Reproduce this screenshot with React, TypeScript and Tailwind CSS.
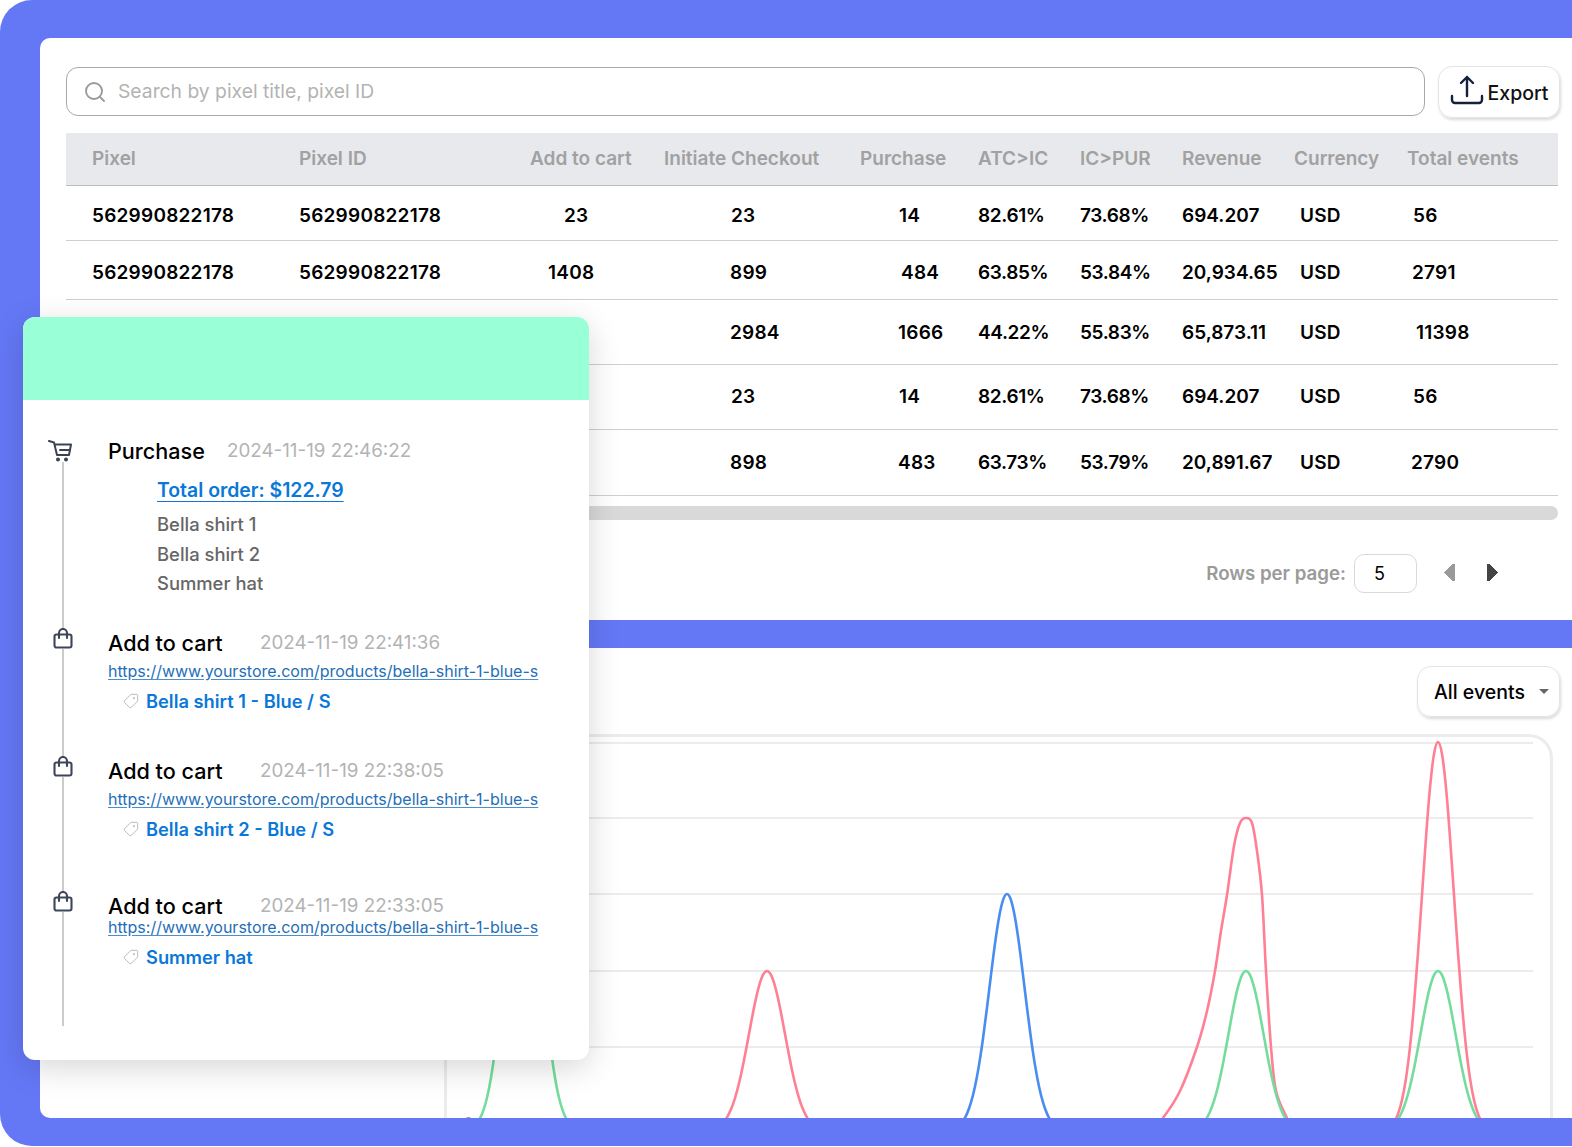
import { Search, Tag } from "lucide-react";

const headers = ["Pixel", "Pixel ID", "Add to cart", "Initiate Checkout", "Purchase", "ATC>IC", "IC>PUR", "Revenue", "Currency", "Total events"];

const gridCols = "grid grid-cols-[233px_231px_134px_196px_118px_102px_102px_112px_113px_151px]";

const tight = "tracking-normal";
const pct = "tracking-[-0.02em]";

const rows = [
  {
    h: "h-[55px] pt-[6px]",
    cells: [
      ["562990822178", "pl-[26px]"], ["562990822178", ""], ["23", "pl-[34px]"], ["23", "pl-[67px]"], ["14", "pl-[39px]"],
      ["82.61%", pct], ["73.68%", pct], ["694.207", tight], ["USD", "pl-[6px]"], ["56", "pl-[6px]"],
    ],
  },
  {
    h: "h-[59px] pt-[6px]",
    cells: [
      ["562990822178", "pl-[26px]"], ["562990822178", ""], ["1408", "pl-[18px]"], ["899", "pl-[66px]"], ["484", "pl-[41px]"],
      ["63.85%", pct], ["53.84%", pct], ["20,934.65", tight], ["USD", "pl-[6px]"], ["2791", "pl-[5px]"],
    ],
  },
  {
    h: "h-[65px] pt-[2px]",
    cells: [
      ["562990822178", "pl-[26px]"], ["562990822178", ""], ["6748", "pl-[10px]"], ["2984", "pl-[66px]"], ["1666", "pl-[38px]"],
      ["44.22%", pct], ["55.83%", pct], ["65,873.11", tight], ["USD", "pl-[6px]"], ["11398", "pl-[9px]"],
    ],
  },
  {
    h: "h-[65px]",
    cells: [
      ["562990822178", "pl-[26px]"], ["562990822178", ""], ["23", "pl-[34px]"], ["23", "pl-[67px]"], ["14", "pl-[39px]"],
      ["82.61%", pct], ["73.68%", pct], ["694.207", tight], ["USD", "pl-[6px]"], ["56", "pl-[6px]"],
    ],
  },
  {
    h: "h-[66px] pt-[2px]",
    cells: [
      ["562990822178", "pl-[26px]"], ["562990822178", ""], ["1409", "pl-[10px]"], ["898", "pl-[66px]"], ["483", "pl-[38px]"],
      ["63.73%", pct], ["53.79%", pct], ["20,891.67", tight], ["USD", "pl-[6px]"], ["2790", "pl-[4px]"],
    ],
  },
];

const ExportIcon = () => (
  <svg width="34" height="32" viewBox="0 0 34 32" fill="none" stroke="#14213d" strokeWidth="2.4" strokeLinecap="round" strokeLinejoin="round" className="-mt-[5px]">
    <path d="M17 22V3M11 9l6-6 6 6" />
    <path d="M2 22v4a3 3 0 0 0 3 3h24a3 3 0 0 0 3-3v-4" />
  </svg>
);

const CartIcon = () => (
  <svg width="24" height="22" viewBox="0 0 24 22" fill="none" stroke="#3a4354" strokeWidth="2" strokeLinecap="round" strokeLinejoin="round">
    <path d="M1 1l5 1.5L9 15h12l2-10.5H6.5" />
    <path d="M12 10h10" />
    <circle cx="10" cy="19.5" r="1" fill="#3a4354" />
    <circle cx="18" cy="19.5" r="1" fill="#3a4354" />
  </svg>
);

const BagIcon = () => (
  <svg width="20" height="21" viewBox="0 0 20 21" fill="none" stroke="#3d4658" strokeWidth="2.1" strokeLinecap="round" strokeLinejoin="round" className="block">
    <rect x="1.5" y="6.5" width="17" height="13" rx="2" />
    <path d="M6 10V5a4 4 0 0 1 8 0v5" />
  </svg>
);

const AddToCart = ({ date, name, className, urlClass }: { date: string; name: string; className: string; urlClass: string }) => (
  <div className={`relative pl-[85px] ${className}`}>
    <div className="absolute left-[30px] -top-[1px] bg-white">
      <BagIcon />
    </div>
    <div className="flex items-center">
      <span className="text-[21.6px] leading-[28px] font-medium text-black w-[152px]">Add to cart</span>
      <span className="text-[18.8px] leading-[26px] text-[#b3b3b3]">{date}</span>
    </div>
    <div className={`text-[16px] leading-[24px] text-[#1f6fb8] underline underline-offset-2 decoration-[#4a90d0] ${urlClass}`}>
      https://www.yourstore.com/products/bella-shirt-1-blue-s
    </div>
    <div className="flex items-center mt-[6px] pl-[15px] gap-[7px]">
      <Tag size={16} strokeWidth={1} color="#9a9a9a" className="rotate-90" />
      <span className="text-[18.3px] leading-[24px] font-semibold text-[#0a78d8]">{name}</span>
    </div>
  </div>
);

// smooth line through a list of points
const smooth = (pts: number[][]) => {
  let d = `M${pts[0][0]} ${pts[0][1]}`;
  for (let i = 0; i < pts.length - 1; i++) {
    const p0 = pts[i - 1] || pts[i];
    const p1 = pts[i];
    const p2 = pts[i + 1];
    const p3 = pts[i + 2] || p2;
    d += ` C${p1[0] + (p2[0] - p0[0]) / 6} ${p1[1] + (p2[1] - p0[1]) / 6} ${p2[0] - (p3[0] - p1[0]) / 6} ${p2[1] - (p3[1] - p1[1]) / 6} ${p2[0]} ${p2[1]}`;
  }
  return d;
};

const bump = (cx: number, top: number, s: number) => {
  const pts: number[][] = [];
  for (let dx = -60; dx <= 60; dx += 4) {
    pts.push([cx + dx, 1130 - (1130 - top) * Math.exp(-(dx * dx) / (2 * s * s))]);
  }
  return smooth(pts);
};

const midPink = smooth([
  [1150, 1131], [1163, 1117], [1180, 1090], [1197, 1046], [1207, 1010], [1215, 970], [1221, 930], [1227, 894],
  [1234, 845], [1240, 822], [1246, 817], [1252, 822], [1257, 850], [1262, 894], [1266, 970], [1271, 1046],
  [1276, 1090], [1287, 1117], [1295, 1131],
]);

const Chart = () => (
  <svg className="w-[1109px] h-[387px]" viewBox="444 733 1109 387" fill="none">
    <path d="M447 742H1533M447 817H1533M447 893H1533M447 970H1533M447 1046H1533" stroke="#ececec" strokeWidth="2" />
    <text x="464" y="1127" fontSize="14" fill="#999">0</text>
    <path d={bump(523, 817, 17)} stroke="#74dc9c" strokeWidth="2.6" />
    <path d={bump(767, 970, 18)} stroke="#ff7f95" strokeWidth="2.6" />
    <path d={bump(1007, 893, 17.5)} stroke="#4a8df0" strokeWidth="2.6" />
    <path d={midPink} stroke="#ff7f95" strokeWidth="2.6" />
    <path d={bump(1246, 970, 17.5)} stroke="#74dc9c" strokeWidth="2.6" />
    <path d={bump(1438, 741, 16)} stroke="#ff7f95" strokeWidth="2.6" />
    <path d={bump(1438, 970, 17.5)} stroke="#74dc9c" strokeWidth="2.6" />
  </svg>
);

export default function App() {
  return (
    <div className="relative w-[1572px] h-[1147px] bg-white overflow-hidden font-['Inter',sans-serif]">
      <div className="flex flex-col w-full h-[1146px] bg-[#6478f6] rounded-l-[32px] pl-[40px] pt-[38px] pb-[28px] gap-[28px]">
        <div className="h-[582px] bg-white rounded-tl-[10px] pl-[26px] pt-[29px] pr-[12px]">
          <div className="flex gap-[13px] items-start">
            <div className="flex items-center shrink-0 w-[1359px] h-[49px] border border-[#a8a8a8] rounded-[12px] pl-[16px] gap-[11px]">
              <Search size={24} strokeWidth={1.9} color="#9a9a9a" />
              <span className="text-[19.3px] text-[#b3b3b3]">Search by pixel title, pixel ID</span>
            </div>
            <div className="flex items-center justify-center shrink-0 gap-[4px] w-[122px] h-[52px] -mt-[1px] rounded-[14px] border border-[#e4e4e4] shadow-[1px_2px_3px_rgba(0,0,0,0.15)]">
              <ExportIcon />
              <span className="text-[19.5px] font-medium text-[#111] pt-[4px]">Export</span>
            </div>
          </div>
          <div className="mt-[15px] w-[1492px]">
            <div className={`${gridCols} items-center h-[53px] bg-[#e8e9ed] border-b border-[#bdbdbd] text-[19px] font-semibold text-[#a1a1a1]`}>
              {headers.map((h, i) => (
                <div key={h} className={i === 0 ? "pl-[26px]" : ""}>{h}</div>
              ))}
            </div>
            {rows.map((r, i) => (
              <div key={i} className={`${gridCols} items-center ${r.h} border-b border-[#cfcfcf] text-[19px] tracking-[0.012em] font-semibold text-black`}>
                {r.cells.map((c, j) => (
                  <div key={j} className={c[1]}>{c[0]}</div>
                ))}
              </div>
            ))}
            <div className="h-[14px] mt-[10px] rounded-full bg-[#d9d9d9]" />
          </div>
          <div className="flex items-center justify-end mt-[34px] pr-[62px]">
            <span className="text-[18.7px] font-semibold text-[#9a9a9a] pt-[2px]">Rows per page:</span>
            <div className="flex items-center w-[63px] h-[39px] ml-[8px] pl-[19px] border border-[#d9d9d9] rounded-[10px] text-[18px] text-black">5</div>
            <svg width="11" height="17" viewBox="0 0 11 17" className="ml-[27px] -mt-[2px]" shapeRendering="crispEdges"><path d="M11 0v17H8L0 8.5 8 0z" fill="#9a9a9a" /></svg>
            <svg width="11" height="17" viewBox="0 0 11 17" className="ml-[32px] -mt-[2px]" shapeRendering="crispEdges"><path d="M0 0v17h3l8-8.5L3 0z" fill="#444" /></svg>
          </div>
        </div>
        <div className="flex-1 min-h-0 bg-white rounded-bl-[10px] overflow-hidden pl-[404px]">
          <div className="flex justify-end pt-[18px] pr-[12px]">
            <div className="flex items-center w-[143px] h-[51px] pl-[16px] rounded-[14px] border border-[#e4e4e4] shadow-[1px_2px_3px_rgba(0,0,0,0.15)]">
              <span className="text-[19.5px] font-medium text-black pt-[3px]">All events</span>
              <span className="ml-[14px] w-0 h-0 border-x-[5px] border-x-transparent border-t-[5px] border-t-[#666]" />
            </div>
          </div>
          <div className="mt-[17px] w-[1109px] h-[387px] border-[3px] border-b-0 border-[#ececec] rounded-tr-[24px] overflow-hidden">
            <div className="-ml-[3px] -mt-[3px]"><Chart /></div>
          </div>
        </div>
      </div>

      <div className="absolute left-[23px] top-[317px] w-[566px] h-[743px] bg-white rounded-[12px] overflow-hidden shadow-[0_8px_32px_rgba(0,0,0,0.16)]">
        <div className="h-[83px] bg-[#99ffd6]" />
        <div className="relative pt-[37px]">
          <div className="absolute left-[39px] top-[50px] h-[576px] w-[2px] bg-[#cccccc]" />
          <div className="relative pl-[85px]">
            <div className="absolute left-[25px] top-[3px] bg-white">
              <CartIcon />
            </div>
            <div className="flex items-center">
              <span className="text-[21.6px] leading-[28px] font-medium text-black w-[119px]">Purchase</span>
              <span className="text-[18.8px] leading-[26px] text-[#b3b3b3]">2024-11-19 22:46:22</span>
            </div>
            <div className="pl-[49px] mt-[11px]">
              <span className="text-[19.4px] leading-[28px] font-semibold text-[#0a78d8] underline underline-offset-4">Total order: $122.79</span>
              <div className="mt-[6px] text-[18.4px] leading-[29.5px] font-medium text-[#666]">
                <div>Bella shirt 1</div>
                <div>Bella shirt 2</div>
                <div>Summer hat</div>
              </div>
            </div>
          </div>
          <AddToCart className="mt-[30px]" urlClass="mt-[2px]" date="2024-11-19 22:41:36" name="Bella shirt 1 - Blue / S" />
          <AddToCart className="mt-[44px]" urlClass="mt-[2px]" date="2024-11-19 22:38:05" name="Bella shirt 2 - Blue / S" />
          <AddToCart className="mt-[51px]" urlClass="-mt-[5px]" date="2024-11-19 22:33:05" name="Summer hat" />
        </div>
      </div>
    </div>
  );
}
